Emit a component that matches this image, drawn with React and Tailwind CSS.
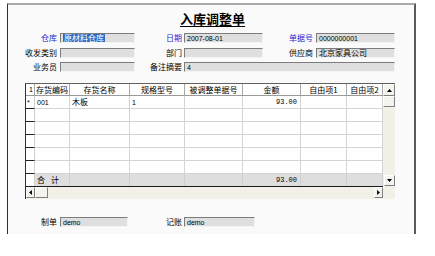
import React from "react";

const inputCls =
  "h-[10px] bg-[#dfdfdf] border-t border-l border-b border-r border-t-[#7c7c7c] border-l-[#7c7c7c] border-b-[#f4f4f4] border-r-[#f4f4f4] flex items-center pl-[2px] overflow-hidden whitespace-nowrap leading-none";

function Field({ w, children }) {
  return <div className={`${inputCls} ${w}`}>{children}</div>;
}

const latin = "font-['Liberation_Sans',sans-serif] text-[7px] text-black";

const cols = [
  { w: "w-[9px]", h: "" },
  { w: "w-[35px]", h: "存货编码" },
  { w: "w-[60px]", h: "存货名称" },
  { w: "w-[55px]", h: "规格型号" },
  { w: "w-[58px]", h: "被调整单据号" },
  { w: "w-[58px]", h: "金额" },
  { w: "w-[46px]", h: "自由项1" },
  { w: "w-[36px]", h: "自由项2" },
];

const rows = [
  ["*", "001", "木板", "1", "", "93.00", "", ""],
  ["", "", "", "", "", "", "", ""],
  ["", "", "", "", "", "", "", ""],
  ["", "", "", "", "", "", "", ""],
  ["", "", "", "", "", "", "", ""],
  ["", "", "", "", "", "", "", ""],
];

function Tri({ dir }) {
  const pts = {
    up: "0,4 3.5,0 7,4",
    down: "0,0 3.5,4 7,0",
    left: "4,0 0,3.5 4,7",
    right: "0,0 4,3.5 0,7",
  }[dir];
  const vb = dir === "up" || dir === "down" ? "0 0 7 4" : "0 0 4 7";
  const size = dir === "up" || dir === "down" ? "w-[5px] h-[3px]" : "w-[3px] h-[5px]";
  return (
    <svg viewBox={vb} className={size}>
      <polygon points={pts} fill="#000" />
    </svg>
  );
}

const btn =
  "bg-[#f4f3ee] border-t border-l border-b border-r border-t-white border-l-white border-b-[#7f7f7f] border-r-[#7f7f7f] flex items-center justify-center";

export default function App() {
  return (
    <div className="w-[435px] h-[256px] bg-white pt-[3px] pl-[7px] font-['Noto_Sans_CJK_SC',sans-serif] text-[8px] leading-none text-black">
      <div className="w-[409px] h-[231px] bg-[#fafafa] border-l border-l-[#2e2e2e] border-t-2 border-t-[#a9a9a9] border-r-2 border-r-[#5a5a5a] flex flex-col">
        {/* title */}
        <div className="mt-[6px] h-[16px] flex justify-center pl-[3px]">
          <span className="text-[13px] leading-[16px] font-bold underline underline-offset-2 decoration-1">
            入库调整单
          </span>
        </div>

        {/* row 1 */}
        <div className="mt-[6px] flex items-center h-[10px]">
          <div className="w-[49px] mr-[3px] text-right text-[#1d1dd6]">仓库</div>
          <Field w="w-[75px]">
            <span className="bg-[#316ac5] text-white px-[1px] py-[1px]">原材料仓库</span>
          </Field>
          <div className="w-[47px] mr-[2px] text-right text-[#1d1dd6]">日期</div>
          <Field w="w-[79px]">
            <span className={latin}>2007-08-01</span>
          </Field>
          <div className="w-[50px] mr-[3px] text-right text-[#1d1dd6]">单据号</div>
          <Field w="w-[79px]">
            <span className={latin}>0000000001</span>
          </Field>
        </div>

        {/* row 2 */}
        <div className="mt-[5px] flex items-center h-[10px]">
          <div className="w-[49px] mr-[3px] text-right">收发类别</div>
          <Field w="w-[75px]" />
          <div className="w-[47px] mr-[2px] text-right">部门</div>
          <Field w="w-[79px]" />
          <div className="w-[50px] mr-[3px] text-right">供应商</div>
          <Field w="w-[79px]">
            <span>北京家具公司</span>
          </Field>
        </div>

        {/* row 3 */}
        <div className="mt-[4px] flex items-center h-[10px]">
          <div className="w-[49px] mr-[3px] text-right">业务员</div>
          <Field w="w-[75px]" />
          <div className="w-[47px] mr-[2px] text-right">备注摘要</div>
          <Field w="w-[211px]">
            <span className={latin}>4</span>
          </Field>
        </div>

        {/* grid */}
        <div className="mt-[11px] ml-[17px] w-[370px] h-[116px] flex border-l border-t border-l-[#303030] border-t-[#606060]">
          <div className="w-[357px] flex flex-col">
            {/* header */}
            <div className="flex h-[12px] border-b border-b-[#9a9a9a] bg-white">
              {cols.map((c, i) => (
                <div
                  key={i}
                  className={`${c.w} shrink-0 h-full border-r border-r-[#a8a8a8] flex items-center ${
                    i === 0 ? "justify-end pr-[1px]" : "justify-center"
                  } overflow-hidden whitespace-nowrap`}
                >
                  {i === 0 ? <span className={latin}>1</span> : c.h}
                </div>
              ))}
            </div>
            {/* rows */}
            {rows.map((r, ri) => (
              <div key={ri} className="flex h-[13px] bg-white">
                {cols.map((c, i) => {
                  if (i === 0) {
                    return (
                      <div
                        key={i}
                        className={`${c.w} shrink-0 h-full border-r border-r-[#d0d0d0] border-b border-b-[#222] flex items-center pl-[1px]`}
                      >
                        <span className={latin}>{r[0]}</span>
                      </div>
                    );
                  }
                  const isNum = i === 5;
                  const isLatin = i === 1 || i === 3 || i === 5;
                  return (
                    <div
                      key={i}
                      className={`${c.w} shrink-0 h-full border-r border-b border-r-[#d4d4d4] border-b-[#d4d4d4] flex items-center ${
                        isNum ? "justify-end pr-[3px]" : "pl-[2px]"
                      } overflow-hidden whitespace-nowrap`}
                    >
                      {isLatin ? (
                        <span className={isNum ? "font-['Liberation_Mono',monospace] text-[7px]" : latin}>{r[i]}</span>
                      ) : (
                        r[i]
                      )}
                    </div>
                  );
                })}
              </div>
            ))}
            {/* total row */}
            <div className="flex h-[13px] border-b border-b-[#1a1a1a]">
              {cols.map((c, i) => {
                if (i === 0) {
                  return (
                    <div key={i} className={`${c.w} shrink-0 h-full bg-white border-r border-r-[#d0d0d0]`} />
                  );
                }
                return (
                  <div
                    key={i}
                    className={`${c.w} shrink-0 h-full bg-[#dedede] border-r border-r-[#cfcfcf] flex items-center ${
                      i === 5 ? "justify-end pr-[3px]" : "pl-[2px]"
                    } whitespace-nowrap`}
                  >
                    {i === 1 ? (
                      <span className="tracking-[6px]">合计</span>
                    ) : i === 5 ? (
                      <span className="font-['Liberation_Mono',monospace] text-[7px]">93.00</span>
                    ) : null}
                  </div>
                );
              })}
            </div>
            {/* horizontal scrollbar */}
            <div className="flex h-[12px] bg-[#f3f1e7]">
              <div className={`${btn} w-[9px] h-[11px]`}>
                <Tri dir="left" />
              </div>
              <div className={`${btn} w-[13px] h-[11px]`} />
              <div className="flex-1" />
              <div className={`${btn} w-[9px] h-[11px]`}>
                <Tri dir="right" />
              </div>
            </div>
          </div>
          {/* vertical scrollbar */}
          <div className="w-[12px] flex flex-col bg-[#f3f1e7]">
            <div className={`${btn} h-[12px] w-[12px]`}>
              <Tri dir="up" />
            </div>
            <div className={`${btn} h-[11px] w-[12px]`} />
            <div className="flex-1" />
            <div className={`${btn} h-[11px] w-[11px] ml-[1px]`}>
              <Tri dir="down" />
            </div>
            <div className="h-[13px]" />
          </div>
        </div>

        {/* bottom */}
        <div className="mt-[18px] flex items-center h-[10px]">
          <div className="w-[49px] mr-[3px] text-right">制单</div>
          <Field w="w-[68px]">
            <span className={latin}>demo</span>
          </Field>
          <div className="w-[54px] mr-[2px] text-right">记账</div>
          <Field w="w-[71px]">
            <span className={latin}>demo</span>
          </Field>
        </div>
      </div>
    </div>
  );
}
